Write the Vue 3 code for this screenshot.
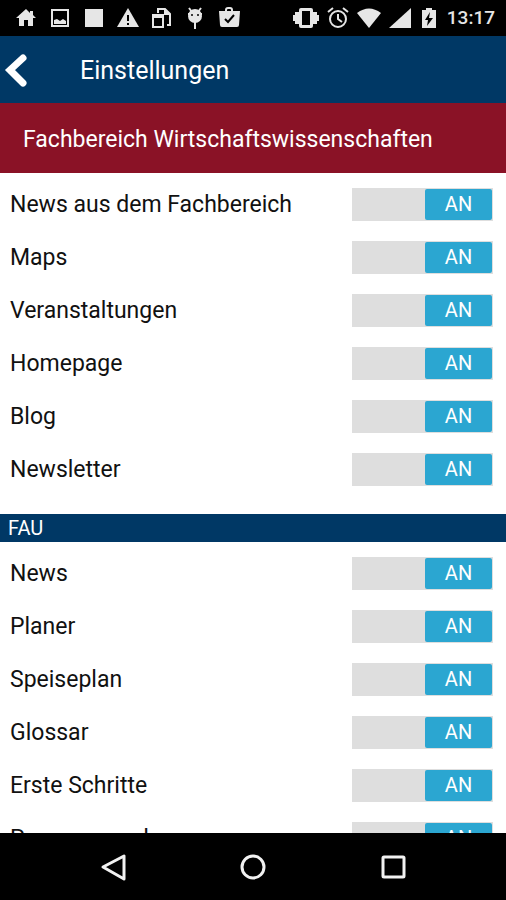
<template>
  <div class="screen">
    <div class="status-bar">
      <div class="status-left">
        <svg viewBox="0 0 24 24"><path d="M12 3l-10 9h3v8h5v-6h4v6h5v-8h3l-3-3V5h-3v2z" /></svg>
        <svg viewBox="0 0 24 24"><path class="line" d="M4 4h16v16H4z" /><path d="M6 18v-4l3-1 3 2 3-2 3 2v3z" /></svg>
        <svg viewBox="0 0 24 24"><path d="M3 3h18v18H3z" /></svg>
        <svg viewBox="0 0 24 24"><path d="M12 2L1 21h22z" /><path class="cut" d="M11 9h2v6h-2zM11 17h2v2h-2z" /></svg>
        <svg viewBox="0 0 24 24"><path class="line" d="M8 7V3h7l5 5v11h-3" /><path d="M14 3v6h7z" /><path class="line" d="M3 9h10v12H3z" /><path d="M2 8h12v4H2z" /></svg>
        <svg viewBox="0 0 24 24"><circle cx="11" cy="10" r="7" /><path class="line" d="M5 2l3 4M17 2l-3 4M4 8h2M16 8h2M11 16v7" /><circle class="cut" cx="8" cy="9" r="1" /><circle class="cut" cx="14" cy="9" r="1" /></svg>
        <svg viewBox="0 0 24 24"><path class="line" d="M8 6V4q0-2 2-2h2q2 0 2 2v2" /><path d="M1 5h21l-1 14q0 2-2 2H4q-2 0-2-2z" /><path class="cut-line" d="M7 13l3 3 6-7" /></svg>
      </div>
      <div class="status-right">
        <svg class="wide" viewBox="0 0 28 24"><path d="M9 2h10q2 0 2 2v16q0 2-2 2H9q-2 0-2-2V4q0-2 2-2zM3 6h4v12H3zM1 9h2v6H1zM21 6h4v12h-4zM25 9h2v6h-2z" /><path class="cut" d="M10 5h8v14h-8z" /></svg>
        <svg class="mid" viewBox="0 0 22 24"><circle class="line" cx="11" cy="13" r="8" /><path class="line" d="M11 8v5l4 3M1 6l5-4M21 6l-5-4" /></svg>
        <svg class="broad" viewBox="0 0 26 24"><path d="M1 7q12-9 24 0L13 22z" /></svg>
        <svg class="mid" viewBox="0 0 22 24"><path d="M22 2v20H0z" /></svg>
        <svg class="mid" viewBox="0 0 22 24"><path d="M8 2h6v2h4v18H4V4h4z" /><path class="cut" d="M12 6l-5 8h3l-1 6 6-8h-4z" /></svg>
        <span class="clock">13:17</span>
      </div>
    </div>

    <header class="app-bar">
      <button class="back" type="button" aria-label="Zurück">
        <svg viewBox="0 0 24 36"><path d="M19 5L6 17l13 13" /></svg>
      </button>
      <h1>Einstellungen</h1>
    </header>

    <main class="content">
      <section v-for="group in groups" :key="group.title">
        <h2 :class="group.main ? 'department' : 'divider'">{{ group.title }}</h2>
        <div class="list">
          <label v-for="item in group.items" :key="item.name" class="row">
            <span class="name">{{ item.name }}</span>
            <input v-model="item.on" type="checkbox" role="switch" />
            <span class="switch" aria-hidden="true">
              <span class="thumb">{{ item.on ? "AN" : "AUS" }}</span>
            </span>
          </label>
        </div>
      </section>
    </main>

    <nav class="nav-bar">
      <button type="button" aria-label="Zurück"><svg viewBox="0 0 28 28"><path d="M25 3v23L4 14z" /></svg></button>
      <button type="button" aria-label="Startseite"><svg viewBox="0 0 28 28"><circle cx="14" cy="14" r="11" /></svg></button>
      <button type="button" aria-label="Übersicht"><svg viewBox="0 0 28 28"><rect x="4" y="4" width="21" height="20" rx="1" /></svg></button>
    </nav>
  </div>
</template>

<script setup>
import { reactive } from "vue";

const toItems = (names) => names.map((name) => ({ name, on: true }));

const groups = reactive([
  {
    title: "Fachbereich Wirtschaftswissenschaften",
    main: true,
    items: toItems(["News aus dem Fachbereich", "Maps", "Veranstaltungen", "Homepage", "Blog", "Newsletter"]),
  },
  {
    title: "FAU",
    main: false,
    items: toItems(["News", "Planer", "Speiseplan", "Glossar", "Erste Schritte", "Personensuche"]),
  },
]);
</script>

<style>
body { margin: 0; background: #fff; }
</style>

<style scoped>
.screen {
  display: flex;
  flex-direction: column;
  height: 100vh;
  font-family: Roboto, "Liberation Sans", sans-serif;
  color: #111;
}
h1, h2 { margin: 0; font-weight: 400; }
button { padding: 0; border: 0; background: none; cursor: pointer; }

.status-bar {
  display: flex;
  flex-shrink: 0;
  justify-content: space-between;
  align-items: center;
  height: 36px;
  padding: 0 11px 0 14px;
  background: #000;
  color: #e6e6e6;
}
.status-left { display: flex; gap: 10px; }
.status-right { display: flex; align-items: center; gap: 7px; }
.status-bar svg { width: 24px; height: 24px; fill: #e6e6e6; }
.status-bar svg.wide { width: 28px; }
.status-bar svg.broad { width: 26px; }
.status-bar svg.mid { width: 22px; }
.status-bar .line { fill: none; stroke: #e6e6e6; stroke-width: 2; }
.status-bar .cut { fill: #000; }
.status-bar .cut-line { fill: none; stroke: #000; stroke-width: 2; }
.clock { font-size: 19px; font-weight: 500; line-height: 24px; }

.app-bar {
  display: flex;
  flex-shrink: 0;
  align-items: center;
  gap: 52px;
  box-sizing: border-box;
  height: 67px;
  padding: 2px 4px 0;
  background: #003865;
  color: #fff;
}
.back { width: 24px; height: 36px; }
.back svg { display: block; fill: none; stroke: #fff; stroke-width: 7; stroke-linecap: round; }
.app-bar h1 { font-size: 25px; line-height: 32px; }

.content { flex: 1; min-height: 0; overflow-y: auto; scrollbar-width: none; }
.department {
  padding: 22px 23px 18px;
  background: #8a1226;
  color: #fff;
  font-size: 23px;
  line-height: 30px;
}
.divider {
  padding: 0 8px;
  background: #003865;
  color: #fff;
  font-size: 20px;
  line-height: 28px;
}
.list { padding: 5px 13px 18px 10px; }
.row {
  position: relative;
  display: flex;
  align-items: center;
  justify-content: space-between;
  height: 53px;
  font-size: 23px;
  cursor: pointer;
}
.row input { position: absolute; right: 0; width: 141px; height: 33px; margin: 0; opacity: 0; cursor: pointer; }
.switch {
  display: flex;
  box-sizing: border-box;
  width: 141px;
  height: 33px;
  padding: 1px;
  background: #dedede;
}
.thumb {
  width: 67px;
  border-radius: 2px;
  background: #999;
  color: #fff;
  font-size: 20px;
  line-height: 31px;
  text-align: center;
}
input:checked + .switch { justify-content: flex-end; }
input:checked + .switch .thumb { background: #2ba6d1; }
input:focus-visible + .switch { outline: 2px solid #003865; }

.nav-bar { display: flex; flex-shrink: 0; height: 67px; padding: 0 43px; background: #000; }
.nav-bar button { flex: 1; }
.nav-bar svg { display: block; width: 28px; height: 28px; margin: 0 auto; fill: none; stroke: #f2f2f2; stroke-width: 3; stroke-linejoin: round; }
</style>
